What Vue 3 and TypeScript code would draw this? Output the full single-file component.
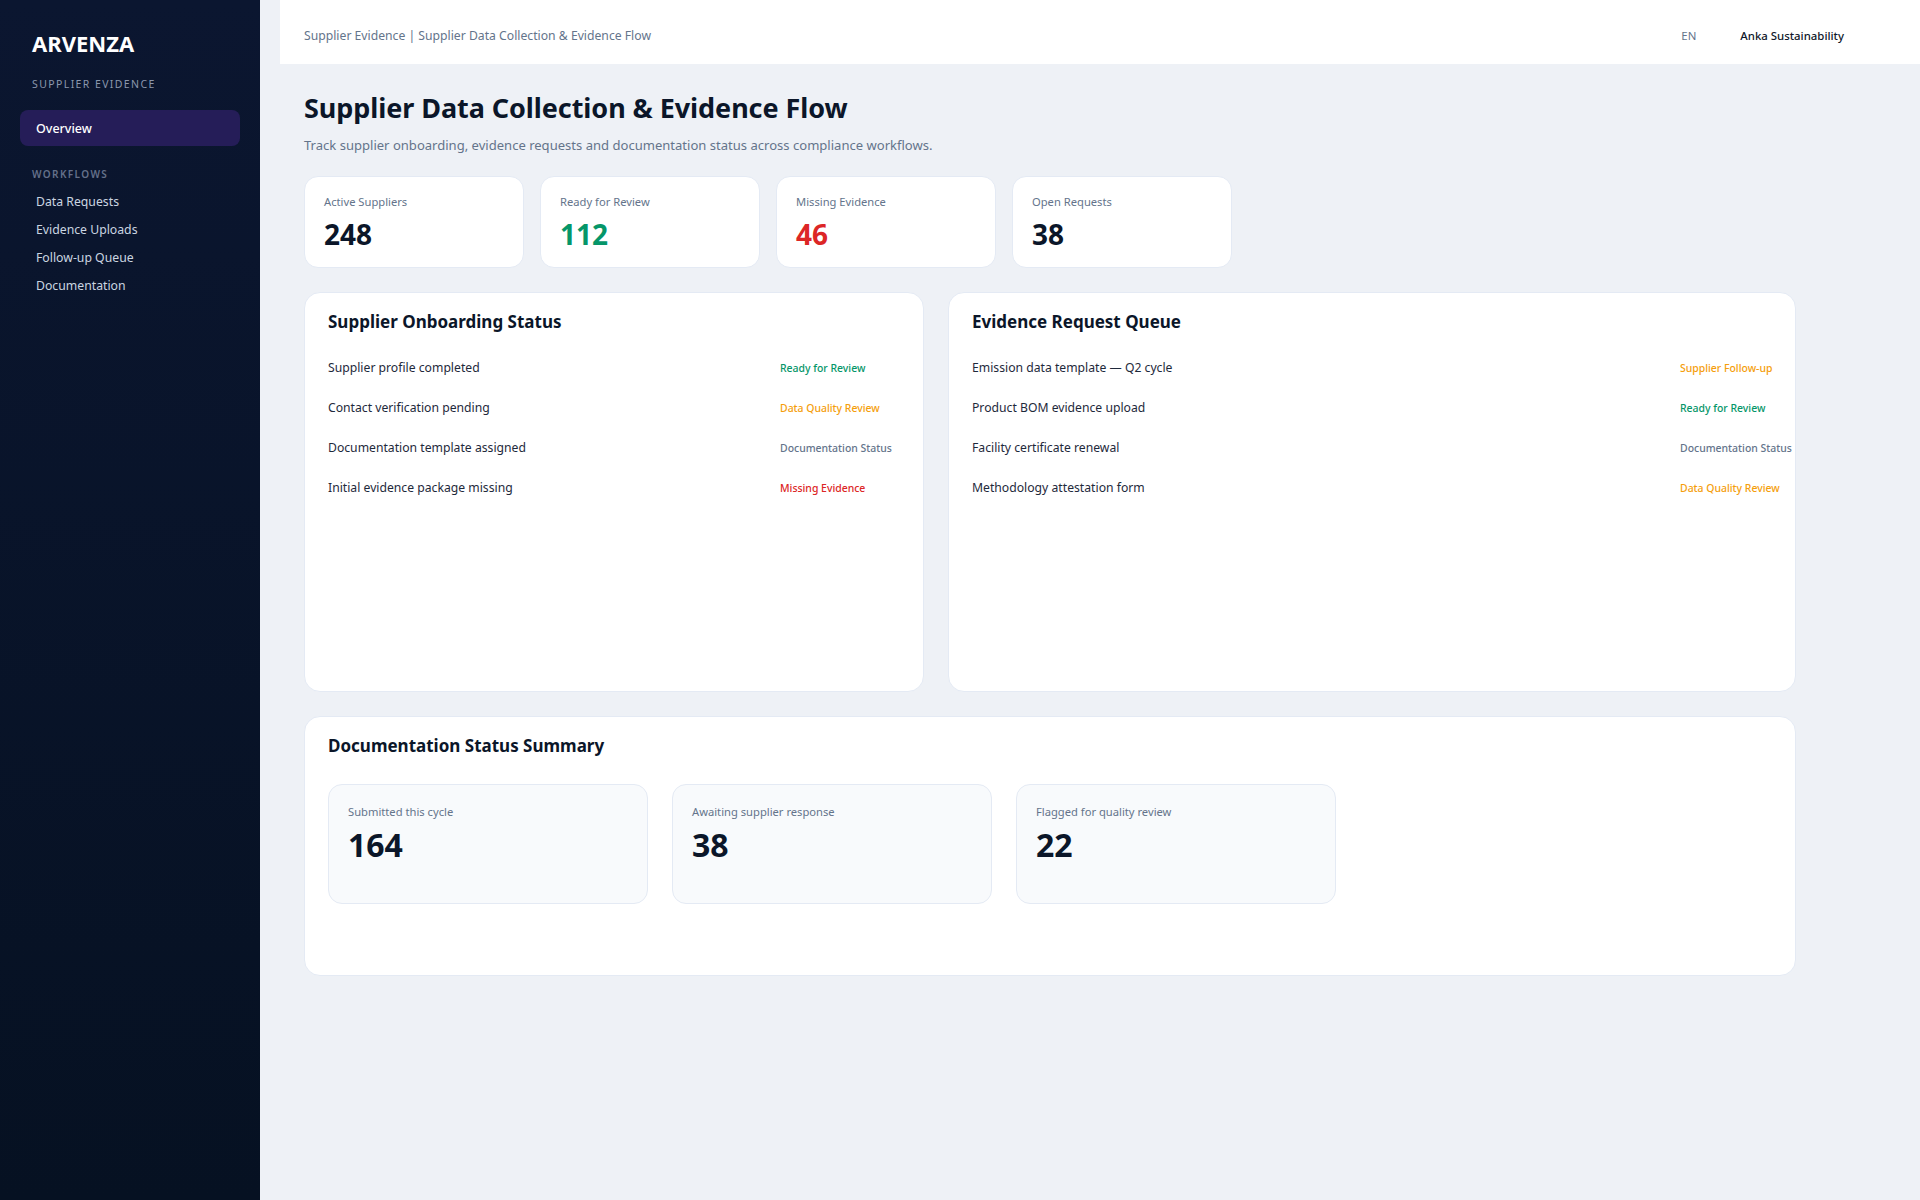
<script setup lang="ts">
interface Stat {
    label: string;
    value: number;
    tone?: string;
}

interface Row {
    text: string;
    status: string;
    tone: string;
}

const navItems = ['Data Requests', 'Evidence Uploads', 'Follow-up Queue', 'Documentation'];

const stats: Stat[] = [
    { label: 'Active Suppliers', value: 248 },
    { label: 'Ready for Review', value: 112, tone: 'green' },
    { label: 'Missing Evidence', value: 46, tone: 'red' },
    { label: 'Open Requests', value: 38 }
];

const onboarding: Row[] = [
    { text: 'Supplier profile completed', status: 'Ready for Review', tone: 'green' },
    { text: 'Contact verification pending', status: 'Data Quality Review', tone: 'amber' },
    { text: 'Documentation template assigned', status: 'Documentation Status', tone: 'slate' },
    { text: 'Initial evidence package missing', status: 'Missing Evidence', tone: 'red' }
];

const queue: Row[] = [
    { text: 'Emission data template — Q2 cycle', status: 'Supplier Follow-up', tone: 'amber' },
    { text: 'Product BOM evidence upload', status: 'Ready for Review', tone: 'green' },
    { text: 'Facility certificate renewal', status: 'Documentation Status', tone: 'slate' },
    { text: 'Methodology attestation form', status: 'Data Quality Review', tone: 'amber' }
];

const summary: Stat[] = [
    { label: 'Submitted this cycle', value: 164 },
    { label: 'Awaiting supplier response', value: 38 },
    { label: 'Flagged for quality review', value: 22 }
];
</script>

<template>
    <div class="layout">
        <aside class="sidebar">
            <div class="brand">ARVENZA</div>
            <div class="brand-sub">SUPPLIER EVIDENCE</div>
            <a class="nav-active">Overview</a>
            <div class="nav-heading">WORKFLOWS</div>
            <a v-for="item in navItems" :key="item" class="nav-link">{{ item }}</a>
        </aside>

        <div class="main">
            <header class="topbar">
                <span class="crumb">Supplier Evidence | Supplier Data Collection &amp; Evidence Flow</span>
                <div class="topbar-right">
                    <span class="lang">EN</span>
                    <span class="org">Anka Sustainability</span>
                </div>
            </header>

            <main class="content">
                <h1 class="title">Supplier Data Collection &amp; Evidence Flow</h1>
                <p class="subtitle">Track supplier onboarding, evidence requests and documentation status across compliance workflows.</p>

                <section class="stats">
                    <div v-for="stat in stats" :key="stat.label" class="stat-card">
                        <div class="stat-label">{{ stat.label }}</div>
                        <div class="stat-value" :class="stat.tone">{{ stat.value }}</div>
                    </div>
                </section>

                <section class="panels">
                    <div class="panel panel-left">
                        <h2 class="panel-title">Supplier Onboarding Status</h2>
                        <div v-for="row in onboarding" :key="row.text" class="row">
                            <span class="row-text">{{ row.text }}</span>
                            <span class="row-status" :class="row.tone">{{ row.status }}</span>
                        </div>
                    </div>
                    <div class="panel panel-right">
                        <h2 class="panel-title">Evidence Request Queue</h2>
                        <div v-for="row in queue" :key="row.text" class="row">
                            <span class="row-text">{{ row.text }}</span>
                            <span class="row-status" :class="row.tone">{{ row.status }}</span>
                        </div>
                    </div>
                </section>

                <section class="summary">
                    <h2 class="panel-title">Documentation Status Summary</h2>
                    <div class="summary-grid">
                        <div v-for="item in summary" :key="item.label" class="summary-card">
                            <div class="stat-label">{{ item.label }}</div>
                            <div class="summary-value">{{ item.value }}</div>
                        </div>
                    </div>
                </section>
            </main>
        </div>
    </div>
</template>

<style>
body {
    background: #eef1f6;
}
</style>

<style scoped>
.layout {
    display: flex;
    min-height: 1200px;
    font-family: "Noto Sans", sans-serif;
    color: #0b1629;
    background: #eef1f6;
}

.sidebar {
    width: 260px;
    flex-shrink: 0;
    box-sizing: border-box;
    padding: 27px 20px;
    display: flex;
    flex-direction: column;
    background: linear-gradient(180deg, #0b1630, #061122);
}

.brand {
    margin-left: 12px;
    font-size: 22px;
    line-height: 32px;
    font-weight: 700;
    color: #fff;
}

.brand-sub {
    margin: 17px 0 0 12px;
    font-size: 10.5px;
    line-height: 16px;
    letter-spacing: 1.4px;
    color: #8b97ad;
}

.nav-active {
    margin-top: 18px;
    height: 36px;
    padding-left: 16px;
    border-radius: 8px;
    background: #251d58;
    color: #fff;
    font-size: 12.5px;
    font-weight: 500;
    line-height: 38px;
}

.nav-heading {
    margin: 21px 0 7px 12px;
    font-size: 10px;
    line-height: 14px;
    font-weight: 600;
    letter-spacing: 1.4px;
    color: #64708a;
}

.nav-link {
    height: 28px;
    padding-left: 16px;
    font-size: 12.25px;
    line-height: 28px;
    color: #cbd5e1;
}

.main {
    flex: 1;
    min-width: 0;
    padding-left: 20px;
}

.topbar {
    height: 64px;
    box-sizing: border-box;
    padding: 7px 76px 0 24px;
    display: flex;
    align-items: center;
    justify-content: space-between;
    background: #fff;
}

.crumb {
    font-size: 12.2px;
    color: #64748b;
}

.topbar-right {
    display: flex;
    gap: 44px;
    font-size: 11.4px;
}

.lang {
    color: #64748b;
}

.org {
    font-weight: 500;
    color: #0f172a;
}

.content {
    width: 1492px;
    margin-left: 24px;
    padding-top: 25px;
}

.title {
    margin: 0;
    font-size: 27px;
    line-height: 38px;
    font-weight: 700;
    letter-spacing: -0.07px;
    color: #0b1629;
}

.subtitle {
    margin: 8px 0 0;
    font-size: 13.05px;
    line-height: 20px;
    color: #64748b;
}

.stats {
    margin-top: 21px;
    display: flex;
    gap: 16px;
}

.stat-card {
    width: 220px;
    height: 92px;
    box-sizing: border-box;
    padding: 16px 19px;
    border: 1px solid #e4eaf4;
    border-radius: 14px;
    background: #fff;
}

.stat-label {
    font-size: 11.2px;
    line-height: 18px;
    color: #64748b;
}

.stat-value {
    margin-top: 5px;
    font-size: 28px;
    line-height: 36px;
    font-weight: 700;
}

.panels {
    margin-top: 24px;
    display: flex;
    gap: 24px;
}

.panel {
    height: 400px;
    box-sizing: border-box;
    padding: 15px 0 0 23px;
    border: 1px solid #e4eaf4;
    border-radius: 16px;
    background: #fff;
}

.panel-left {
    width: 620px;
}

.panel-right {
    width: 848px;
}

.panel-title {
    margin: 0 0 11px;
    font-size: 17px;
    line-height: 28px;
    font-weight: 700;
    color: #0b1629;
}

.row {
    height: 40px;
    display: flex;
    align-items: center;
    font-size: 12.2px;
    color: #1e293b;
}

.row-status {
    padding-top: 1px;
    font-size: 10.45px;
    font-weight: 500;
}

.panel-left .row-text {
    width: 452px;
}

.panel-right .row-text {
    width: 708px;
}

.green {
    color: #059669;
}

.red {
    color: #dc2626;
}

.amber {
    color: #f59e0b;
}

.slate {
    color: #64748b;
}

.summary {
    margin-top: 24px;
    height: 260px;
    box-sizing: border-box;
    padding: 15px 23px;
    border: 1px solid #e4eaf4;
    border-radius: 16px;
    background: #fff;
}

.summary-grid {
    margin-top: 24px;
    display: flex;
    gap: 24px;
}

.summary-card {
    width: 320px;
    height: 120px;
    box-sizing: border-box;
    padding: 18px 19px;
    border: 1px solid #e4eaf4;
    border-radius: 14px;
    background: #f8fafc;
}

.summary-value {
    margin-top: 3px;
    font-size: 32px;
    line-height: 42px;
    font-weight: 700;
}
</style>
